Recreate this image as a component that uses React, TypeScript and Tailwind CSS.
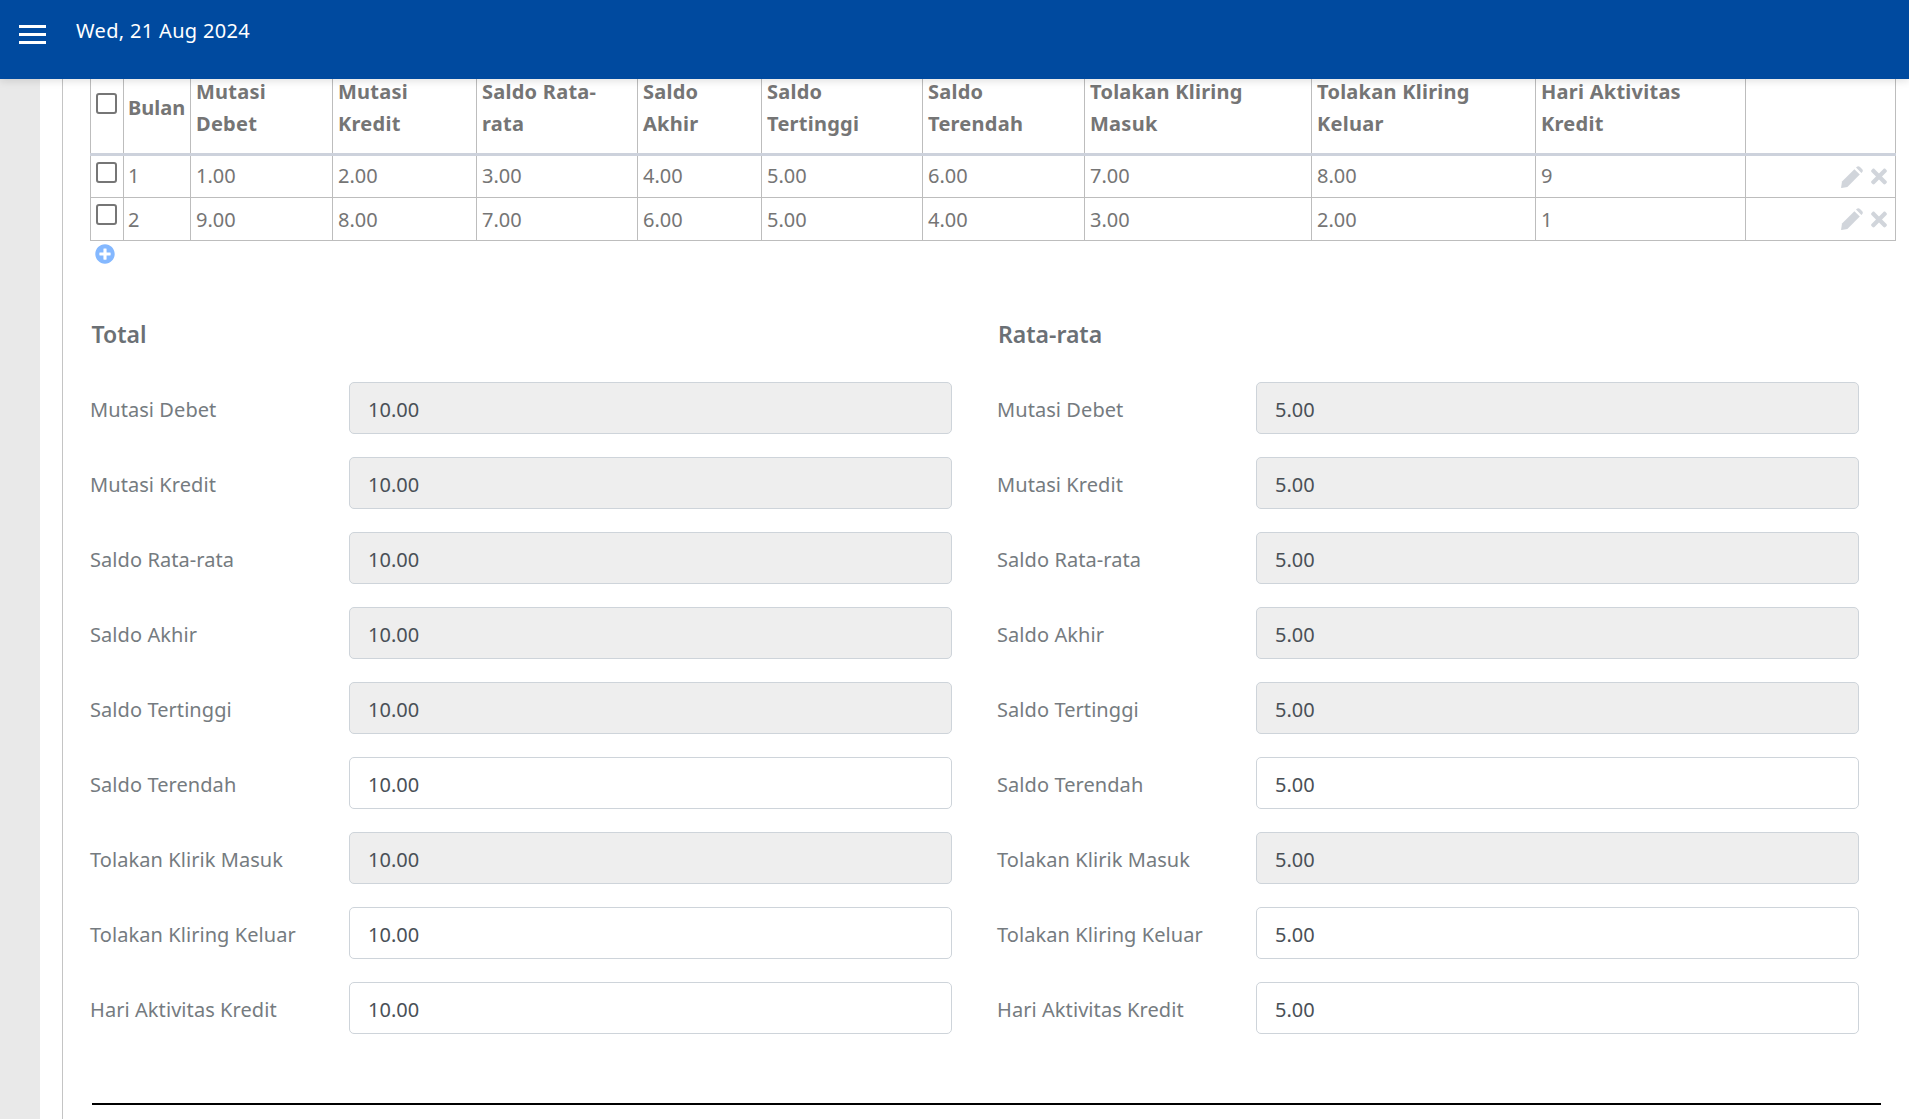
import { FaPlusCircle, FaTimes } from 'react-icons/fa';

const columns = [
  { label: 'Bulan', width: 'w-[67px]' },
  { label: 'Mutasi\nDebet', width: 'w-[142px]' },
  { label: 'Mutasi\nKredit', width: 'w-[144px]' },
  { label: 'Saldo Rata-\nrata', width: 'w-[161px]' },
  { label: 'Saldo\nAkhir', width: 'w-[124px]' },
  { label: 'Saldo\nTertinggi', width: 'w-[161px]' },
  { label: 'Saldo\nTerendah', width: 'w-[162px]' },
  { label: 'Tolakan Kliring\nMasuk', width: 'w-[227px]' },
  { label: 'Tolakan Kliring\nKeluar', width: 'w-[224px]' },
  { label: 'Hari Aktivitas\nKredit', width: 'w-[210px]' },
];

const rows = [
  ['1', '1.00', '2.00', '3.00', '4.00', '5.00', '6.00', '7.00', '8.00', '9'],
  ['2', '9.00', '8.00', '7.00', '6.00', '5.00', '4.00', '3.00', '2.00', '1'],
];

const fields = [
  { label: 'Mutasi Debet', disabled: true },
  { label: 'Mutasi Kredit', disabled: true },
  { label: 'Saldo Rata-rata', disabled: true },
  { label: 'Saldo Akhir', disabled: true },
  { label: 'Saldo Tertinggi', disabled: true },
  { label: 'Saldo Terendah', disabled: false },
  { label: 'Tolakan Klirik Masuk', disabled: true },
  { label: 'Tolakan Kliring Keluar', disabled: false },
  { label: 'Hari Aktivitas Kredit', disabled: false },
];

function Checkbox() {
  return <input type="checkbox" className="block h-[21px] w-[21px] appearance-none rounded-[3px] border-2 border-[#767676] bg-white" />;
}

function PencilIcon() {
  return (
    <svg viewBox="0 0 22 22" className="h-[22px] w-[22px]" fill="currentColor">
      <path d="M1 15.6 13.4 3.2l5.4 5.4L6.4 21 .6 21.9a.5.5 0 0 1-.5-.5z" />
      <path d="M15 1.6l.6-.6a2.4 2.4 0 0 1 3.4 0l2 2a2.4 2.4 0 0 1 0 3.4l-.6.6z" />
    </svg>
  );
}

function SummaryColumn({ title, value, first }: { title: string; value: string; first?: boolean }) {
  return (
    <div>
      <h3 className={`flex h-[40px] items-center text-[23px] font-semibold text-[#6b7075] ${first ? 'pl-[1.5px]' : 'pl-[1px]'}`}>{title}</h3>
      <div className="mt-[28px] flex flex-col gap-[23px]">
        {fields.map((field) => (
          <div key={field.label} className="flex items-center">
            <label className="w-[259px] shrink-0 pt-[4px] text-[20px] tracking-[0.07px] text-[#757b80]">{field.label}</label>
            <input
              readOnly
              value={value}
              className={`h-[52px] w-[603px] rounded-[5px] border border-[#ced4da] px-[18px] pt-[2px] text-[20px] text-[#495057] ${field.disabled ? 'bg-[#eeeeee]' : 'bg-white'}`}
            />
          </div>
        ))}
      </div>
    </div>
  );
}

export default function App() {
  return (
    <div className="flex h-[1119px] flex-col overflow-hidden bg-white font-['Noto_Sans',sans-serif]">
      <header className="relative z-10 flex h-[79px] shrink-0 items-start bg-[#004a9f] text-white shadow-[0_2px_8px_rgba(0,0,0,0.12)]">
        <div className="ml-[19px] mt-[25px] flex w-[27px] flex-col gap-[5px]">
          <span className="h-[3px] bg-white" />
          <span className="h-[3px] bg-white" />
          <span className="h-[3px] bg-white" />
        </div>
        <span className="ml-[30px] mt-[17px] text-[20px] leading-[28px] tracking-[0.33px]">Wed, 21 Aug 2024</span>
      </header>

      <div className="flex min-h-0 flex-1">
        <aside className="w-[40px] shrink-0 bg-[#e9e9e9]" />
        <main className="ml-[22px] flex-1 border-l border-[#c4c4c4] pl-[27px] pr-[14px]">
          <table className="-mt-[8px] w-[1805px] table-fixed border-collapse text-[20px] text-[#757575]">
            <thead>
              <tr className="h-[83px] border-b-[3px] border-[#cdd2dc]">
                <th className="w-[33px] border border-b-0 border-[#bdbdbd] pl-[5px] pt-[21px] align-top">
                  <Checkbox />
                </th>
                {columns.map((col) => (
                  <th
                    key={col.label}
                    className={`${col.width} border border-b-0 border-[#bdbdbd] text-left align-top font-bold leading-[32px] whitespace-pre-line ${col.label === 'Bulan' ? 'px-[4px] pt-[20px]' : 'px-[5px] pt-[4px] tracking-[0.25px]'}`}
                  >
                    {col.label}
                  </th>
                ))}
                <th className="w-[150px] border border-b-0 border-[#bdbdbd]" />
              </tr>
            </thead>
            <tbody>
              {rows.map((row, r) => (
                <tr key={row[0]} className="h-[43px]">
                  <td className="border border-[#bdbdbd] pl-[5px] align-top pt-[6px]">
                    <Checkbox />
                  </td>
                  {row.map((cell, i) => (
                    <td key={i} className={`border border-[#bdbdbd] ${i === 0 ? 'px-[4px]' : 'px-[5px]'} ${r === 0 ? 'pb-[1px]' : 'pt-[2px]'}`}>
                      {cell}
                    </td>
                  ))}
                  <td className="border border-[#bdbdbd] pr-[8px]">
                    <div className="flex items-center justify-end gap-[8px] text-[#d1d5db]">
                      <PencilIcon />
                      <FaTimes className="h-[23px] w-[16px]" />
                    </div>
                  </td>
                </tr>
              ))}
            </tbody>
          </table>
          <FaPlusCircle className="ml-[5px] mt-[3px] h-[20px] w-[20px] text-[#84b8ff]" />

          <div className="mt-[50px] flex gap-[45px]">
            <SummaryColumn title="Total" value="10.00" first />
            <SummaryColumn title="Rata-rata" value="5.00" />
          </div>

          <hr className="ml-[2px] mt-[69px] w-[1789px] border-t-2 border-black" />
        </main>
      </div>
    </div>
  );
}
